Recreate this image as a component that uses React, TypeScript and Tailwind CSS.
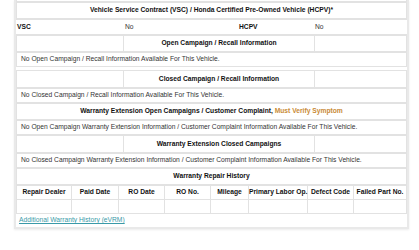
import React from 'react';

const line = 'border border-[#e2e2e2]';

type TitleProps = { children: React.ReactNode; split?: boolean; h?: string };

// Section title row: either spans the whole width or sits between two blank cells
function TitleTable({ children, split = false, h = 'h-[16px]' }: TitleProps) {
  return (
    <table className="w-full table-fixed border-collapse">
      {split && (
        <colgroup>
          <col className="w-[107px]" />
          <col />
          <col className="w-[92px]" />
        </colgroup>
      )}
      <tbody>
        <tr className={h}>
          {split && <td className={line} />}
          <td className={`${line} text-center font-bold text-[#111]`}>{children}</td>
          {split && <td className={line} />}
        </tr>
      </tbody>
    </table>
  );
}

function InfoRow({ text }: { text: string }) {
  return (
    <table className="w-full border-collapse">
      <tbody>
        <tr className="h-[14px]">
          <td className={`${line} px-[4px]`}>{text}</td>
        </tr>
      </tbody>
    </table>
  );
}

const historyCols = [
  { label: 'Repair Dealer', w: 'w-[55px]' },
  { label: 'Paid Date', w: 'w-[47px]' },
  { label: 'RO Date', w: 'w-[46px]' },
  { label: 'RO No.', w: 'w-[46px]' },
  { label: 'Mileage', w: 'w-[38px]' },
  { label: 'Primary Labor Op.', w: 'w-[59px]' },
  { label: 'Defect Code', w: 'w-[46px]' },
  { label: 'Failed Part No.', w: '' },
];

export default function App() {
  return (
    <div className="h-[250px] w-[419px] overflow-hidden bg-white font-['Liberation_Sans',Arial,sans-serif] text-[6.7px] leading-none text-[#333]">
      <div className="ml-[14px] w-[395px] border-x-2 border-b-2 border-[#e9e9e9] shadow-[0_1px_2px_rgba(0,0,0,0.08)]">
        <div className={`h-[2px] ${line} border-t-0`} />

        {/* VSC / HCPV */}
        <TitleTable>Vehicle Service Contract (VSC) / Honda Certified Pre-Owned Vehicle (HCPV)*</TitleTable>
        <table className="w-full table-fixed border-collapse">
          <colgroup>
            <col className="w-[107px]" />
            <col className="w-[114px]" />
            <col className="w-[76px]" />
            <col />
          </colgroup>
          <tbody>
            <tr className="h-[15px]">
              <td className="border-y border-[#e2e2e2] px-[1px] font-bold text-[#111]">VSC</td>
              <td className="border-y border-[#e2e2e2] px-[2px]">No</td>
              <td className="border-y border-[#e2e2e2] px-[2px] font-bold text-[#111]">HCPV</td>
              <td className="border-y border-[#e2e2e2] px-[2px]">No</td>
            </tr>
          </tbody>
        </table>

        <TitleTable split>Open Campaign / Recall Information</TitleTable>
        <InfoRow text="No Open Campaign / Recall Information Available For This Vehicle." />
        <div className="h-[3px]" />

        <TitleTable split h="h-[17px]">Closed Campaign / Recall Information</TitleTable>
        <InfoRow text="No Closed Campaign / Recall Information Available For This Vehicle." />

        <TitleTable>
          Warranty Extension Open Campaigns / Customer Complaint,{' '}
          <span className="text-[#c98a35]">Must Verify Symptom</span>
        </TitleTable>
        <InfoRow text="No Open Campaign Warranty Extension Information / Customer Complaint Information Available For This Vehicle." />

        <TitleTable split h="h-[17px]">Warranty Extension Closed Campaigns</TitleTable>
        <InfoRow text="No Closed Campaign Warranty Extension Information / Customer Complaint Information Available For This Vehicle." />

        <TitleTable>Warranty Repair History</TitleTable>
        <table className="w-full table-fixed border-collapse">
          <colgroup>
            {historyCols.map((c) => (
              <col key={c.label} className={c.w} />
            ))}
          </colgroup>
          <tbody>
            <tr className="h-[14px]">
              {historyCols.map((c) => (
                <td key={c.label} className={`${line} text-center font-bold text-[#111] whitespace-nowrap`}>
                  {c.label}
                </td>
              ))}
            </tr>
            <tr className="h-[14px]">
              {historyCols.map((c) => (
                <td key={c.label} className={line} />
              ))}
            </tr>
          </tbody>
        </table>
        <div className="h-[13px] px-[3px] pt-[3px]">
          <a href="#" className="text-[#3a9aa8] underline">
            Additional Warranty History (eVRM)
          </a>
        </div>
      </div>
    </div>
  );
}
